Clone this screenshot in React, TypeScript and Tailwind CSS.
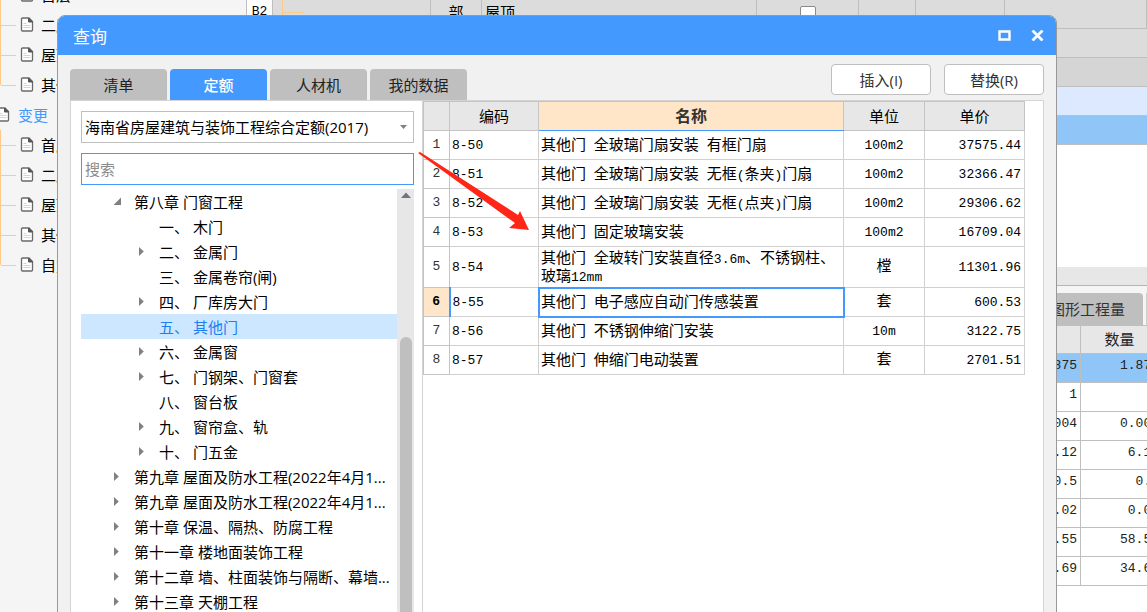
import { useState } from "react";
import clsx from "clsx";

type TreeNode = { label: string; level: 1 | 2; state?: "open" | "closed" };
type Quota = { code: string; name: string; unit: string; price: string };

const outline = ["首层", "二层", "屋顶", "其他"];
const changes = ["首层", "二层", "屋顶", "其他", "自定义"];

const tabs = ["清单", "定额", "人材机", "我的数据"];

const tree: TreeNode[] = [
    { label: "第八章 门窗工程", level: 1, state: "open" },
    { label: "一、 木门", level: 2 },
    { label: "二、 金属门", level: 2, state: "closed" },
    { label: "三、 金属卷帘(闸)", level: 2 },
    { label: "四、 厂库房大门", level: 2, state: "closed" },
    { label: "五、 其他门", level: 2 },
    { label: "六、 金属窗", level: 2, state: "closed" },
    { label: "七、 门钢架、门窗套", level: 2, state: "closed" },
    { label: "八、 窗台板", level: 2 },
    { label: "九、 窗帘盒、轨", level: 2, state: "closed" },
    { label: "十、 门五金", level: 2, state: "closed" },
    { label: "第九章 屋面及防水工程(2022年4月1...", level: 1, state: "closed" },
    { label: "第九章 屋面及防水工程(2022年4月1...", level: 1, state: "closed" },
    { label: "第十章 保温、隔热、防腐工程", level: 1, state: "closed" },
    { label: "第十一章 楼地面装饰工程", level: 1, state: "closed" },
    { label: "第十二章 墙、柱面装饰与隔断、幕墙...", level: 1, state: "closed" },
    { label: "第十三章 天棚工程", level: 1, state: "closed" },
];

const quotas: Quota[] = [
    { code: "8-50", name: "其他门 全玻璃门扇安装 有框门扇", unit: "100m2", price: "37575.44" },
    { code: "8-51", name: "其他门 全玻璃门扇安装 无框(条夹)门扇", unit: "100m2", price: "32366.47" },
    { code: "8-52", name: "其他门 全玻璃门扇安装 无框(点夹)门扇", unit: "100m2", price: "29306.62" },
    { code: "8-53", name: "其他门 固定玻璃安装", unit: "100m2", price: "16709.04" },
    { code: "8-54", name: "其他门 全玻转门安装直径3.6m、不锈钢柱、玻璃12mm", unit: "樘", price: "11301.96" },
    { code: "8-55", name: "其他门 电子感应自动门传感装置", unit: "套", price: "600.53" },
    { code: "8-56", name: "其他门 不锈钢伸缩门安装", unit: "10m", price: "3122.75" },
    { code: "8-57", name: "其他门 伸缩门电动装置", unit: "套", price: "2701.51" },
];

const quantities = [
    ["1.875", "1.875"],
    ["1", ""],
    ["0.004", "0.004"],
    ["6.12", "6.12"],
    ["0.5", "0.5"],
    ["0.02", "0.02"],
    ["58.55", "58.55"],
    ["34.69", "34.69"],
];

const FileIcon = () => (
    <svg width="14" height="16" viewBox="0 0 14 16" fill="none" className="shrink-0">
        <path d="M1.5 2a1 1 0 0 1 1-1H9l3.5 3.5V13a1 1 0 0 1-1 1h-9a1 1 0 0 1-1-1z" fill="#fff" stroke="#6a6a6a" strokeWidth="1.3" />
        <path d="M8.5 1v4h4z" fill="#555" stroke="#555" />
        <path d="M3.5 6.5h3M3.5 8.5h7M3.5 10.5h7" stroke="#d4d4d4" />
    </svg>
);

const Arrow = ({ open }: { open: boolean }) =>
    open ? (
        <svg width="9" height="9" viewBox="0 0 9 9" className="shrink-0">
            <path d="M8 0.5V8H0.5z" fill="#808080" />
        </svg>
    ) : (
        <svg width="9" height="9" viewBox="0 0 9 9" className="shrink-0">
            <path d="M1 0L5.8 4.5L1 9z" fill="#808080" />
        </svg>
    );

// Latin runs are set in the narrower monospace face
const MixedText = ({ text }: { text: string }) => (
    <>
        {text.split(/([\x20-\x7e]+)/).filter(Boolean).map((run, index) =>
            /^[\x20-\x7e]/.test(run) ? (
                <span key={index} className="font-['Liberation_Mono',monospace] text-[13px] leading-none">{run}</span>
            ) : (
                run
            )
        )}
    </>
);

const Branch = ({ items, className }: { items: string[]; className?: string }) => (
    <ul className={className}>
        {items.map((item, index) => (
            <li key={index} className="flex h-[30px] items-center">
                <span className={clsx("w-px self-stretch bg-[#ffc987]", index === items.length - 1 && "mb-[15px]")} />
                <span className="h-px w-[15px] bg-[#ffc987]" />
                <a href="#" className="flex items-center gap-[7px] pl-1 whitespace-nowrap">
                    <FileIcon />
                    {item}
                </a>
            </li>
        ))}
    </ul>
);

const Sidebar = () => (
    <aside className="w-[246px] shrink-0 bg-[#f5f5f5] leading-[30px]">
        <Branch items={outline} className="-mt-5" />
        <a href="#" className="flex h-[30px] items-center gap-2 text-[#4499ff]">
            <span className="-ml-1 flex"><FileIcon /></span>
            变更
        </a>
        <Branch items={changes} />
    </aside>
);

const ProjectGrid = () => {
    const line = "border-r border-b border-[#bfbfbf]";
    return (
        <table className="w-full table-fixed border-collapse leading-5">
            <colgroup>
                <col className="w-[26px]" />
                <col className="w-[158px]" />
                <col className="w-[51px]" />
                <col />
                <col className="w-[102px]" />
                <col className="w-[57px]" />
                <col className="w-[89px]" />
                <col className="w-[142px]" />
            </colgroup>
            <tbody>
                <tr className="h-7 bg-[#dcdcdc]">
                    <td className="border-x border-[#bfbfbf] bg-white pb-1 text-center font-['Liberation_Mono',monospace] text-[13px]">B2</td>
                    <td className={line}>
                        <div className="flex h-[27px] pl-[9px]">
                            <span className="w-px bg-[#ffc987]" />
                            <span className="mt-3 h-px w-5 bg-[#ffc987]" />
                        </div>
                    </td>
                    <td className={clsx(line, "pb-1 text-center")}>部</td>
                    <td className={clsx(line, "pb-1 pl-[3px]")}>屋顶</td>
                    <td className={line}>
                        <input type="checkbox" aria-label="锁定" className="mx-auto block size-4 appearance-none rounded-xs border border-[#8a8a8a] bg-white" />
                    </td>
                    <td className={line} />
                    <td className={line} />
                    <td className={line} />
                </tr>
                {["bg-[#dcdcdc]", "bg-[#d5d5d5]", "bg-[#dde9ff]", "bg-[#90c6f7]"].map((color) => (
                    <tr key={color} className={clsx("h-[29px]", color)}>
                        <td colSpan={8} className="border-b border-[#bfbfbf]" />
                    </tr>
                ))}
            </tbody>
        </table>
    );
};

const QuantityPanel = () => (
    <section className="border-t border-[#b5b5b5] bg-[#f5f5f5] pt-[7px]">
        <div className="flex justify-end gap-[3px]">
            <button className="h-8 w-[140px] rounded-t-sm bg-[#bfbfbf] pr-[18px] text-right text-[#333]">图形工程量</button>
            <span className="w-px bg-[#d0d0d0]" />
        </div>
        <table className="w-[calc(100%+16px)] table-fixed border-collapse bg-white text-right font-['Liberation_Mono',monospace] text-[13px] leading-[18px] text-[#222]">
            <colgroup>
                <col />
                <col className="w-[82px]" />
            </colgroup>
            <thead>
                <tr className="h-7 bg-[#e7e7e7] font-['Noto_Sans_CJK_SC',sans-serif] text-[15px]">
                    <th className="border border-[#bfbfbf]" />
                    <th className="border border-[#bfbfbf] pr-1 text-center font-normal">数量</th>
                </tr>
            </thead>
            <tbody>
                {quantities.map(([amount, total], index) => (
                    <tr key={index} className={clsx("h-[29px]", index === 0 && "bg-[#90c6f7]")}>
                        <td className="border border-[#bfbfbf] pr-[3px] pb-1">{amount}</td>
                        <td className="border border-[#bfbfbf] pr-[3px] pb-1">{total}</td>
                    </tr>
                ))}
            </tbody>
        </table>
    </section>
);

const QuotaTree = () => {
    const [selected, setSelected] = useState(5);

    return (
        <div className="mt-1 flex min-h-0 flex-1">
            <ul className="min-w-0 flex-1 overflow-hidden">
                {tree.map((node, index) => (
                    <li key={index}>
                        <button
                            onClick={() => setSelected(index)}
                            className={clsx(
                                "flex h-[25px] w-full items-center gap-3 text-left whitespace-nowrap",
                                node.level === 1 ? "pl-8" : "pl-[57px]",
                                index === selected && "bg-[#cce7ff] text-[#1e80f0]"
                            )}>
                            {node.state ? <Arrow open={node.state === "open"} /> : <span className="w-[9px]" />}
                            {node.label}
                        </button>
                    </li>
                ))}
            </ul>
            <div className="flex w-[17px] flex-col items-center bg-[#e7e7e7]">
                <svg width="10" height="6" viewBox="0 0 10 6" className="mt-[3px] shrink-0">
                    <path d="M0 6L5 0.5L10 6z" fill="#737380" />
                </svg>
                <div className="mt-[139px] w-3 flex-1 rounded-t-full bg-[#bfbfbf]" />
            </div>
        </div>
    );
};

const QuotaTable = () => {
    const [current, setCurrent] = useState(5);
    const head = "border border-[#c4c4c4] font-normal";
    const cell = "border-x border-b border-[#d0d0d0]";

    return (
        <table className="w-full table-fixed border-collapse leading-[18px]">
            <colgroup>
                <col className="w-[26px]" />
                <col className="w-[89px]" />
                <col />
                <col className="w-[81px]" />
                <col className="w-[100px]" />
            </colgroup>
            <thead>
                <tr className="h-[29px] bg-[#e7e7e7]">
                    <th className={head} />
                    <th className={head}>编码</th>
                    <th className="border border-[#c4c4c4] border-b-[#4499ff] bg-[#ffe6c8] text-base leading-[18px] font-bold text-[#333]">名称</th>
                    <th className={head}>单位</th>
                    <th className={head}>单价</th>
                </tr>
            </thead>
            <tbody>
                {quotas.map((quota, index) => (
                    <tr key={quota.code} onClick={() => setCurrent(index)} className="h-[29px]">
                        <td
                            className={clsx(
                                "border-x border-b border-[#c4c4c4] text-center font-['Liberation_Mono',monospace] text-[13px]",
                                index === current ? "border-r-2 border-r-[#4499ff] bg-[#ffe6c8] font-bold" : "text-[#333]"
                            )}>
                            {index + 1}
                        </td>
                        <td className={clsx(cell, "pb-1 pl-[2px]")}><MixedText text={quota.code} /></td>
                        <td className={clsx(cell, "px-[2px] pt-[1px] pb-[3px]", index === current && "outline-2 -outline-offset-1 outline-[#4499ff]")}>
                            <MixedText text={quota.name} />
                        </td>
                        <td className={clsx(cell, "pb-1 text-center")}><MixedText text={quota.unit} /></td>
                        <td className={clsx(cell, "pr-[3px] pb-1 text-right")}><MixedText text={quota.price} /></td>
                    </tr>
                ))}
            </tbody>
        </table>
    );
};

const QueryDialog = () => {
    const [tab, setTab] = useState("定额");

    return (
        <div
            role="dialog"
            aria-labelledby="dialog-title"
            className="absolute top-[15px] right-[90px] -bottom-4 left-[57px] flex flex-col overflow-hidden rounded-t-lg border border-[#999] bg-[#f1f1f1]">
            <header className="flex h-[39px] shrink-0 items-center bg-[#4499ff] pr-3 pl-[15px] text-white">
                <h1 id="dialog-title" className="flex-1 pt-[2px] text-[17px] leading-6">查询</h1>
                <button aria-label="最大化" className="mr-5">
                    <svg width="13" height="11" viewBox="0 0 13 11" fill="none">
                        <path d="M1.5 1.5h10v8h-10z" stroke="#fff" strokeWidth="2.4" />
                    </svg>
                </button>
                <button aria-label="关闭">
                    <svg width="13" height="11" viewBox="0 0 13 11" fill="none">
                        <path d="M1.5 0.5l10 10M11.5 0.5l-10 10" stroke="#fff" strokeWidth="2.8" />
                    </svg>
                </button>
            </header>
            <div className="flex shrink-0 items-start justify-between px-3 pt-[9px]">
                <div role="tablist" className="flex gap-[3px] pt-[5px]">
                    {tabs.map((name) => (
                        <button
                            key={name}
                            role="tab"
                            aria-selected={name === tab}
                            onClick={() => setTab(name)}
                            className={clsx(
                                "h-[31px] w-[97px] rounded-t-sm",
                                name === tab ? "bg-[#4499ff] font-medium text-white" : "bg-[#bfbfbf] text-[#222]"
                            )}>
                            {name}
                        </button>
                    ))}
                </div>
                <div className="flex gap-[13px] text-[#333]">
                    <button className="h-[31px] w-[100px] rounded-sm border border-[#bfbfbf] bg-white">插入(I)</button>
                    <button className="h-[31px] w-[100px] rounded-sm border border-[#bfbfbf] bg-white">替换(R)</button>
                </div>
            </div>
            <div className="mx-3 flex min-h-0 flex-1 border border-[#d4d4d4] bg-white">
                <div className="flex w-[352px] shrink-0 flex-col border-r border-[#d4d4d4] pt-[10px] pr-2 pl-[10px]">
                    <div className="relative">
                        <select aria-label="定额库" className="h-8 w-full appearance-none border border-[#bfbfbf] bg-white pl-[3px]">
                            <option>海南省房屋建筑与装饰工程综合定额(2017)</option>
                        </select>
                        <svg width="7" height="4" viewBox="0 0 7 4" className="pointer-events-none absolute top-[14px] right-[7px]">
                            <path d="M0 0h7L3.5 4z" fill="#808080" />
                        </svg>
                    </div>
                    <input
                        type="text"
                        aria-label="搜索"
                        placeholder="搜索"
                        className="mt-[10px] h-8 w-full border border-[#4499ff] bg-white pl-[3px] outline-none placeholder:text-[#8c8c8c]"
                    />
                    <QuotaTree />
                </div>
                <div className="flex-1 pr-[18px]">
                    <QuotaTable />
                </div>
            </div>
        </div>
    );
};

const App = () => (
    <div className="relative flex h-screen overflow-hidden bg-white font-['Open_Sans','Noto_Sans_CJK_SC',sans-serif] text-[15px] leading-5 text-black">
        <Sidebar />
        <main className="flex min-w-0 flex-1 flex-col overflow-hidden">
            <ProjectGrid />
            <div className="h-[122px] bg-white" />
            <div className="h-[18px] bg-[#e7e7e7]" />
            <QuantityPanel />
        </main>
        <QueryDialog />
        <svg width="112" height="79" viewBox="0 0 112 79" className="pointer-events-none absolute top-[152px] left-[418px]">
            <path d="M0 1L2 0L100 63L102 59L111 78L91 76L97 71L54 40z" fill="#ff2617" />
        </svg>
    </div>
);

export default App;
